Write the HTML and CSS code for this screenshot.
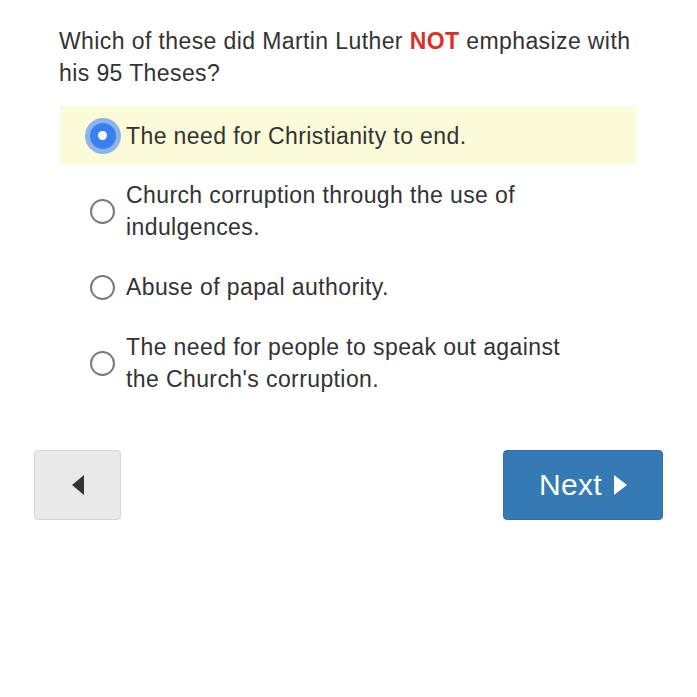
FILE: index.html
```html
<!DOCTYPE html>
<html>
<head>
<meta charset="utf-8">
<link rel="stylesheet" href="styles.css">
</head>
<body>
<div class="page">
  <p class="question">Which of these did Martin Luther <strong class="not">NOT</strong> emphasize with his 95 Theses?</p>
  <ul class="options">
    <li class="option selected"><span class="radio"></span><span class="label">The need for Christianity to end.</span></li>
    <li class="option"><span class="radio"></span><span class="label">Church corruption through the use of indulgences.</span></li>
    <li class="option"><span class="radio"></span><span class="label">Abuse of papal authority.</span></li>
    <li class="option"><span class="radio"></span><span class="label">The need for people to speak out against the Church's corruption.</span></li>
  </ul>
  <div class="nav">
    <button class="btn back"><span class="tri-left"></span></button>
    <button class="btn next">Next <span class="tri-right"></span></button>
  </div>
</div>
</body>
</html>
```

FILE: styles.css
```css
* { box-sizing: border-box; }
html, body { margin: 0; padding: 0; background: #fff; }
body { font-family: "Liberation Sans", Arial, Helvetica, sans-serif; color: #333; }
.page { width: 697px; height: 697px; padding-top: 25px; }
.question {
  margin: 0 0 0 59px;
  width: 590px;
  font-size: 23px;
  letter-spacing: 0.4px;
  line-height: 32px;
}
.not { color: #d9302a; font-weight: bold; }
.options { list-style: none; margin: 17px 0 0 60px; padding: 0; width: 576px; }
.option {
  display: flex;
  align-items: center;
  padding: 14px 0 14px 30px;
  font-size: 23px;
  letter-spacing: 0.4px;
  line-height: 32px;
}
.option.selected { background: #fcfbd9; padding: 13.5px 0 13.5px 30px; }
.radio {
  flex: none;
  width: 25px;
  height: 25px;
  border-radius: 50%;
  border: 2px solid #7a7a7a;
  margin-right: 11px;
  display: flex;
  align-items: center;
  justify-content: center;
}
.selected .radio {
  border: none;
  background: #3a7ff0;
  box-shadow: 0 0 0 5px #8bb5ea;
  width: 26px;
  height: 26px;
  margin-left: -0.5px;
  margin-right: 10.5px;
}
.selected .radio::after {
  content: "";
  width: 9px;
  height: 9px;
  border-radius: 50%;
  background: #fff;
}
.label { width: 460px; }
.nav {
  display: flex;
  justify-content: space-between;
  margin: 41px 34px 0 34px;
}
.btn {
  height: 70px;
  border-radius: 4px;
  font-family: inherit;
  cursor: pointer;
  display: flex;
  align-items: center;
  justify-content: center;
  padding: 0;
}
.back {
  width: 87px;
  background: #e9e9e9;
  border: 1px solid #d6d6d6;
}
.next {
  width: 160px;
  background: #357ab5;
  border: 1px solid #2f70a8;
  color: #fff;
  font-size: 30px;
  letter-spacing: 0.3px;
  gap: 12px;
}
.tri-left {
  width: 0; height: 0;
  border-top: 10px solid transparent;
  border-bottom: 10px solid transparent;
  border-right: 12px solid #333;
}
.tri-right {
  width: 0; height: 0;
  border-top: 10px solid transparent;
  border-bottom: 10px solid transparent;
  border-left: 13px solid #fff;
}
```
